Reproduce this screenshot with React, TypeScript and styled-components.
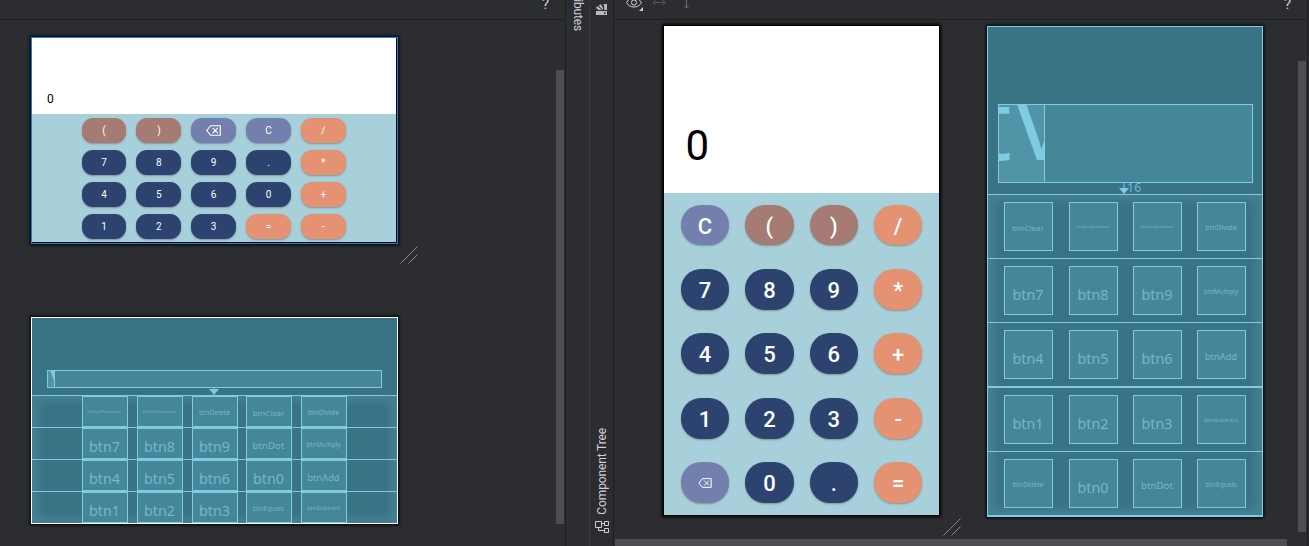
import React from "react";
import styled, { createGlobalStyle } from "styled-components";

const Global = createGlobalStyle`
  * { box-sizing: border-box; }
  body { margin: 0; background: #2b2d30; overflow: hidden; }
`;

const cyan = "#7ecbe2";

const Window = styled.div`
  display: flex;
  width: 1309px;
  height: 546px;
  overflow: hidden;
  background: #2b2d30;
  font-family: Roboto, "Liberation Sans", sans-serif;
  color: #ced0d6;
`;

const Pane = styled.section<{ $w: number }>`
  display: flex;
  flex-direction: column;
  flex: none;
  width: ${(p) => p.$w}px;
  height: 546px;
  border-right: 1px solid #1e1f22;
`;

const Toolbar = styled.header<{ $pad: string }>`
  display: flex;
  flex: none;
  justify-content: space-between;
  align-items: flex-start;
  height: 20px;
  padding: ${(p) => p.$pad};
  border-bottom: 1px solid #1e1f22;
  svg { display: block; }
`;

const Tools = styled.div`
  display: flex;
  gap: 8px;
`;

const Help = styled.span`
  margin-top: -5px;
  font: 15px/18px Roboto, sans-serif;
`;

const Canvas = styled.div`
  display: flex;
  flex: 1;
  justify-content: space-between;
  min-height: 0;
`;

const Previews = styled.div<{ $dir: "row" | "column"; $gap: number; $pad: string }>`
  display: flex;
  flex-direction: ${(p) => p.$dir};
  gap: ${(p) => p.$gap}px;
  padding: ${(p) => p.$pad};
  align-items: flex-start;
`;

const ResizeArea = styled.div`
  position: relative;
`;

const Grip = styled.svg<{ $x: number; $y: number }>`
  position: absolute;
  left: ${(p) => p.$x}px;
  top: ${(p) => p.$y}px;
`;

const ScrollBar = styled.div<{ $top: number; $h: number }>`
  flex: none;
  width: 8px;
  height: ${(p) => p.$h}px;
  margin: ${(p) => p.$top}px 1px 0 0;
  background: #4d4e51;
`;

const BottomScroll = styled.div`
  flex: none;
  width: 672px;
  height: 7px;
  margin-left: 1px;
  background: #4d4e51;
`;

const Strip = styled.nav<{ $line: string }>`
  display: flex;
  flex: none;
  flex-direction: column;
  align-items: center;
  justify-content: space-between;
  width: 24px;
  height: 546px;
  border-right: 1px solid ${(p) => p.$line};
  svg { display: block; }
`;

const TabText = styled.span<{ $up?: boolean }>`
  writing-mode: vertical-rl;
  font-size: 12px;
  line-height: 16px;
  letter-spacing: -0.13px;
  white-space: nowrap;
  ${(p) => (p.$up ? "transform: rotate(180deg);" : "margin-top: -20px;")}
`;

const TreeTab = styled.div`
  display: flex;
  flex-direction: column;
  align-items: center;
  gap: 6px;
  padding: 0 0 12px 1px;
`;

const Phone = styled.div<{ $w: number; $h: number; $edge: string }>`
  display: flex;
  flex-direction: column;
  width: ${(p) => p.$w}px;
  height: ${(p) => p.$h}px;
  border: 1px solid ${(p) => p.$edge};
  background: #000;
  box-shadow: 0 0 3px 1px #000;
`;

const Display = styled.div<{ $h: number; $size: number; $pad: string; $inset?: number }>`
  flex: none;
  height: ${(p) => p.$h}px;
  margin-right: ${(p) => p.$inset ?? 0}px;
  padding: ${(p) => p.$pad};
  background: #fff;
  color: #000;
  font: ${(p) => p.$size}px/1 Roboto, sans-serif;
`;

const Keypad = styled.div<{ $land?: boolean }>`
  display: grid;
  flex: 1;
  align-content: start;
  background: #a8d0da;
  ${(p) =>
    p.$land
      ? `grid-template-columns: repeat(5, 44.8px); grid-auto-rows: 24.6px; column-gap: 10px; row-gap: 7.4px;
         padding: 4px 0 0 49.7px; margin-right: 1px; margin-bottom: 1px; font: 400 10px/25px Roboto, sans-serif;`
      : `grid-template-columns: repeat(4, 48.4px); grid-auto-rows: 40.8px; column-gap: 16px; row-gap: 23.6px;
         padding: 11.6px 0 0 16.8px; font: 500 22px/43px Roboto, sans-serif;`}
`;

const tones = { num: "#2b436e", op: "#e59273", par: "#a57b74", fn: "#7380ad" };

const Key = styled.div<{ $tone: keyof typeof tones; $r: number }>`
  display: flex;
  justify-content: center;
  border-radius: ${(p) => p.$r}px;
  background: ${(p) => tones[p.$tone]};
  color: #fff;
  box-shadow: 0 1px 2px rgba(0, 0, 0, 0.28);
  svg { align-self: center; }
`;

const Blueprint = styled.div<{ $w: number; $h: number; $edge: string; $bottom: number; $drop: number }>`
  display: flex;
  flex-direction: column;
  width: ${(p) => p.$w}px;
  height: ${(p) => p.$h}px;
  margin-top: ${(p) => p.$drop}px;
  border: 1px solid ${(p) => p.$edge};
  border-bottom-width: ${(p) => p.$bottom}px;
  background: #387386;
  box-shadow: 0 0 3px 1px #000;
  font-family: "Noto Sans", sans-serif;
  color: #70b9cf;
`;

const BlueTop = styled.div<{ $h: number; $pad: string }>`
  position: relative;
  flex: none;
  height: ${(p) => p.$h}px;
  padding: ${(p) => p.$pad};
`;

const Field = styled.div<{ $h: number }>`
  height: ${(p) => p.$h}px;
  border: 1px solid ${cyan};
  background: #458698;
`;

const FieldText = styled.div<{ $w: number; $size: number; $x: number; $line: number }>`
  width: ${(p) => p.$w}px;
  height: 100%;
  overflow: hidden;
  border-right: 1px solid ${cyan};
  background: #5194a7;
  color: ${cyan};
  font-size: ${(p) => p.$size}px;
  line-height: ${(p) => p.$line}px;
  text-indent: ${(p) => p.$x}px;
  white-space: nowrap;
`;

const Anchor = styled.div<{ $x: number; $y: number }>`
  position: absolute;
  left: ${(p) => p.$x}px;
  top: ${(p) => p.$y}px;
  display: flex;
  font-size: 12.5px;
  line-height: 9px;
  svg { display: block; margin-right: -2px; }
`;

const BlueGrid = styled.div`
  display: flex;
  flex: 1;
  flex-direction: column;
  box-shadow: inset 0 0 8px 6px rgba(104, 160, 178, 0.32);
`;

const BlueRow = styled.div<{ $h: number; $line: number; $pad: string; $gaps: number[] }>`
  display: flex;
  flex: none;
  height: ${(p) => p.$h}px;
  padding: ${(p) => p.$pad};
  border-top: ${(p) => p.$line}px solid ${cyan};
  ${(p) => p.$gaps.map((g, i) => `& > :nth-child(${i + 2}) { margin-left: ${g}px; }`).join("")}
`;

const Cell = styled.div<{ $w: number; $h: number; $size: number; $base: number }>`
  flex: none;
  width: ${(p) => p.$w}px;
  height: ${(p) => p.$h}px;
  padding-top: ${(p) => Math.max(0, p.$h / 2 + p.$base - 0.388 * p.$size - 9)}px;
  padding-right: 1px;
  border: 1px solid ${cyan};
  background: #458698;
  font-size: ${(p) => p.$size}px;
  line-height: 16px;
  display: flex;
  justify-content: center;
  white-space: nowrap;
`;

const metrics: Record<string, [number, number]> = {
  btnClear: [7.8, 4.5],
  btnOpenParentheses: [3.4, 2.2],
  btnCloseParentheses: [3.4, 2.2],
  btnDivide: [7, 4.3],
  btnMultiply: [6.3, 3.8],
  btnAdd: [9.3, 6.1],
  btnSubtract: [6, 3.3],
  btnDelete: [6.7, 4.4],
  btnDot: [9.7, 6.4],
  btnEquals: [6.6, 4.4],
};

type KeyDef = [string, keyof typeof tones];

const landKeys: KeyDef[] = [
  ["(", "par"], [")", "par"], ["del", "fn"], ["C", "fn"], ["/", "op"],
  ["7", "num"], ["8", "num"], ["9", "num"], [".", "num"], ["*", "op"],
  ["4", "num"], ["5", "num"], ["6", "num"], ["0", "num"], ["+", "op"],
  ["1", "num"], ["2", "num"], ["3", "num"], ["=", "op"], ["-", "op"],
];

const portKeys: KeyDef[] = [
  ["C", "fn"], ["(", "par"], [")", "par"], ["/", "op"],
  ["7", "num"], ["8", "num"], ["9", "num"], ["*", "op"],
  ["4", "num"], ["5", "num"], ["6", "num"], ["+", "op"],
  ["1", "num"], ["2", "num"], ["3", "num"], ["-", "op"],
  ["del", "fn"], ["0", "num"], [".", "num"], ["=", "op"],
];

const landRows = [
  ["btnOpenParentheses", "btnCloseParentheses", "btnDelete", "btnClear", "btnDivide"],
  ["btn7", "btn8", "btn9", "btnDot", "btnMultiply"],
  ["btn4", "btn5", "btn6", "btn0", "btnAdd"],
  ["btn1", "btn2", "btn3", "btnEquals", "btnSubtract"],
];

const portRows = [
  ["btnClear", "btnOpenParentheses", "btnCloseParentheses", "btnDivide"],
  ["btn7", "btn8", "btn9", "btnMultiply"],
  ["btn4", "btn5", "btn6", "btnAdd"],
  ["btn1", "btn2", "btn3", "btnSubtract"],
  ["btnDelete", "btn0", "btnDot", "btnEquals"],
];

const Backspace = ({ w, h }: { w: number; h: number }) => (
  <svg width={w} height={h} viewBox="0 0 15 11" fill="none" stroke="#fff" strokeWidth="1.1">
    <path d="M4.6 0.7H14.3V10.3H4.6L0.8 5.5Z M6.6 2.8L11.9 8.2M11.9 2.8L6.6 8.2" />
  </svg>
);

const Keys = ({ keys, r, icon }: { keys: KeyDef[]; r: number; icon: [number, number] }) => (
  <>
    {keys.map(([label, tone]) => (
      <Key key={label} $tone={tone} $r={r}>
        {label === "del" ? <Backspace w={icon[0]} h={icon[1]} /> : label}
      </Key>
    ))}
  </>
);

const Cells = ({ names, w, h, digitBase }: { names: string[]; w: number; h: number; digitBase: number }) => (
  <>
    {names.map((n) => {
      const [size, base] = metrics[n] ?? [14.4, digitBase];
      return (
        <Cell key={n} $w={w} $h={h} $size={size} $base={base}>
          {n}
        </Cell>
      );
    })}
  </>
);

const ResizeGrip = ({ x, y }: { x: number; y: number }) => (
  <Grip $x={x} $y={y} width="18" height="18" stroke="#87888a" strokeWidth="1" fill="none">
    <path d="M0.5 17.5L17.5 0.5M8.5 17.5L17.5 8.5" />
  </Grip>
);

const Arrow = ({ h }: { h: number }) => (
  <svg width="10" height={h} fill={cyan}>
    <path d={`M0 ${h - 6}H10L5 ${h}Z M4.5 0H5.5V${h}H4.5Z`} />
  </svg>
);

export default function App() {
  return (
    <Window>
      <Global />
      <Pane $w={566}>
        <Toolbar $pad="0 16px 0 0">
          <Tools />
          <Help>?</Help>
        </Toolbar>
        <Canvas>
          <Previews $dir="column" $gap={73} $pad="17px 0 0 31px">
            <ResizeArea>
              <Phone $w={367} $h={207} $edge="#1f7fe0">
                <Display $h={76} $size={12} $pad="55px 0 0 15px" $inset={1}>0</Display>
                <Keypad $land>
                  <Keys keys={landKeys} r={11} icon={[15, 11]} />
                </Keypad>
              </Phone>
              <ResizeGrip x={369} y={209} />
            </ResizeArea>
            <Blueprint $w={367} $h={207} $edge="#fff" $bottom={1} $drop={0}>
              <BlueTop $h={77} $pad="52px 15px 0">
                <Field $h={18}>
                  <FieldText $w={7} $size={60} $x={-24.5} $line={10}>tV</FieldText>
                </Field>
                <Anchor $x={177} $y={70}>
                  <Arrow h={7} />
                </Anchor>
              </BlueTop>
              <BlueGrid>
                {landRows.map((names) => (
                  <BlueRow key={names[0]} $h={32} $line={1} $pad="0 0 0 50px" $gaps={[9, 9, 8, 9]}>
                    <Cells names={names} w={46} h={31} digitBase={9.3} />
                  </BlueRow>
                ))}
              </BlueGrid>
            </Blueprint>
          </Previews>
          <ScrollBar $top={50} $h={454} />
        </Canvas>
      </Pane>

      <Strip $line="#393b40">
        <TabText>Attributes</TabText>
      </Strip>

      <Strip $line="#1e1f22">
        <svg width="13" height="16" fill="#b9bbbf">
          <path
            fillRule="evenodd"
            d="M1 11H12V15H1Z M9 12.2V13.8H10.6V12.2Z M1 8L2.4 6L7 10H3.6Z M3.6 5.6L6 4.2L8 8V10Z M8.6 4H12V10H9.2V7Z"
          />
        </svg>
        <TreeTab>
          <TabText $up>Component Tree</TabText>
          <svg width="14" height="13" fill="none" stroke="#ced0d6">
            <path d="M0.5 0.5H6.5V6.5H0.5Z M9.5 0.5H13.5V4.5H9.5Z M9.5 7.5H13.5V11.5H9.5Z M6.5 2.5H9.5 M3.5 6.5V9.5H9.5" />
          </svg>
        </TreeTab>
      </Strip>

      <Pane $w={694}>
        <Toolbar $pad="0 16px 0 12px">
          <Tools>
            <svg width="18" height="12" fill="none" stroke="#ced0d6">
              <path d="M0.6 2.5C3 -3 13 -3 15.4 2.5C13 8.5 3 8.5 0.6 2.5Z" />
              <circle cx="8" cy="2.5" r="2.6" />
              <path d="M17 7V11H13Z" fill="#ced0d6" stroke="none" />
            </svg>
            <svg width="14" height="6" fill="none" stroke="#55575b">
              <path d="M1 2.5H13M3.5 0L1 2.5L3.5 5M10.5 0L13 2.5L10.5 5" />
            </svg>
            <svg width="18" height="10" fill="none" stroke="#6b6d71">
              <path d="M12.5 0V8M10 5.5L12.5 8L15 5.5" />
            </svg>
          </Tools>
          <Help>?</Help>
        </Toolbar>
        <Canvas>
          <Previews $dir="row" $gap={47} $pad="5px 0 0 49px">
            <ResizeArea>
              <Phone $w={277} $h={491} $edge="#000">
                <Display $h={167} $size={42} $pad="99px 0 0 21.5px">0</Display>
                <Keypad>
                  <Keys keys={portKeys} r={20} icon={[14, 10]} />
                </Keypad>
              </Phone>
              <ResizeGrip x={280} y={493} />
            </ResizeArea>
            <Blueprint $w={276} $h={491} $edge={cyan} $bottom={2} $drop={1}>
              <BlueTop $h={167} $pad="77px 9px 0 10px">
                <Field $h={79}>
                  <FieldText $w={46} $size={99} $x={-23} $line={33}>tV</FieldText>
                </Field>
                <Anchor $x={131} $y={156}>
                  <Arrow h={11} />
                  16
                </Anchor>
              </BlueTop>
              <BlueGrid>
                {portRows.map((names, i) => (
                  <BlueRow
                    key={names[0]}
                    $h={i === 3 ? 65 : 64}
                    $line={i === 3 ? 2 : 1}
                    $pad="7px 0 0 16px"
                    $gaps={[16, 15, 15]}
                  >
                    <Cells names={names} w={49} h={49} digitBase={10.3} />
                  </BlueRow>
                ))}
              </BlueGrid>
            </Blueprint>
          </Previews>
          <ScrollBar $top={41} $h={471} />
        </Canvas>
        <BottomScroll />
      </Pane>
    </Window>
  );
}
